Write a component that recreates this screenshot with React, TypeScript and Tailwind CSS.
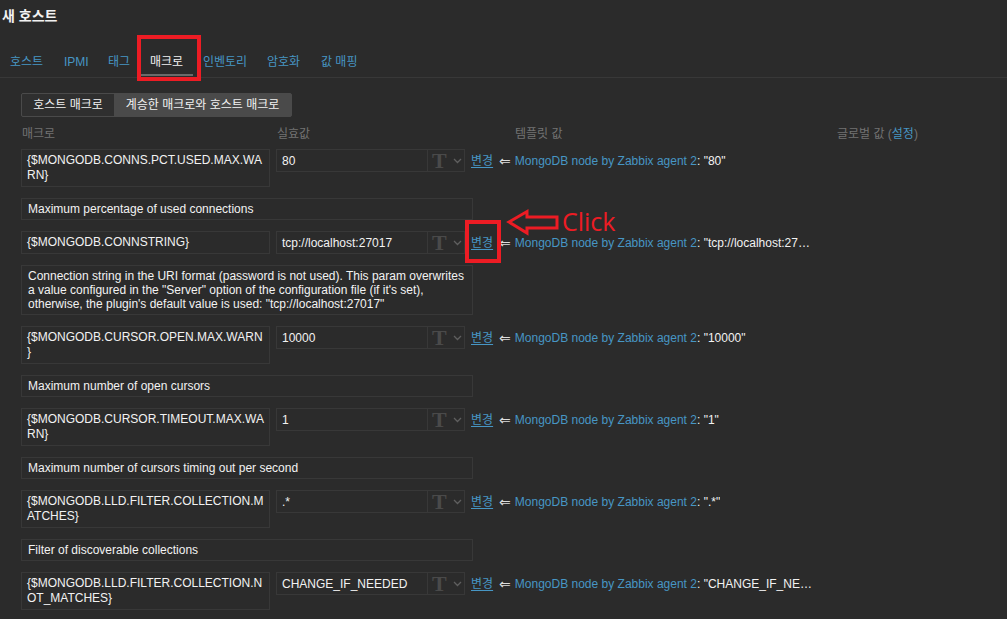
import React from "react";

const FONT = '"Liberation Sans", "Noto Sans CJK KR", Arial, sans-serif';

type Row = {
  macro: string[];
  value: string;
  tpl: string;
  desc?: string[];
};

const rows: Row[] = [
  {
    macro: ["{$MONGODB.CONNS.PCT.USED.MAX.WA", "RN}"],
    value: "80",
    tpl: '"80"',
    desc: ["Maximum percentage of used connections"],
  },
  {
    macro: ["{$MONGODB.CONNSTRING}"],
    value: "tcp://localhost:27017",
    tpl: '"tcp://localhost:27017"',
    desc: [
      "Connection string in the URI format (password is not used). This param overwrites",
      'a value configured in the "Server" option of the configuration file (if it\'s set),',
      'otherwise, the plugin\'s default value is used: "tcp://localhost:27017"',
    ],
  },
  {
    macro: ["{$MONGODB.CURSOR.OPEN.MAX.WARN", "}"],
    value: "10000",
    tpl: '"10000"',
    desc: ["Maximum number of open cursors"],
  },
  {
    macro: ["{$MONGODB.CURSOR.TIMEOUT.MAX.WA", "RN}"],
    value: "1",
    tpl: '"1"',
    desc: ["Maximum number of cursors timing out per second"],
  },
  {
    macro: ["{$MONGODB.LLD.FILTER.COLLECTION.M", "ATCHES}"],
    value: ".*",
    tpl: '".*"',
    desc: ["Filter of discoverable collections"],
  },
  {
    macro: ["{$MONGODB.LLD.FILTER.COLLECTION.N", "OT_MATCHES}"],
    value: "CHANGE_IF_NEEDED",
    tpl: '"CHANGE_IF_NEEDED"',
  },
];

const tabs = [
  { label: "호스트", w: "w-[54px]" },
  { label: "IPMI", w: "w-[44px]" },
  { label: "태그", w: "w-[42px]" },
  { label: "매크로", w: "w-[53px]", active: true },
  { label: "인벤토리", w: "w-[64px]" },
  { label: "암호화", w: "w-[54px]" },
  { label: "값 매핑", w: "w-[60px]" },
];

function MacroRow({ r }: { r: Row }) {
  const two = r.macro.length > 1;
  return (
    <div className="flex items-start">
      <div
        className={`w-[249px] ${two ? "h-[38px]" : "h-[23px]"} border border-[#383838] pl-[5px] pt-[3px] leading-[15px] text-[#f2f2f2]`}
      >
        {r.macro.map((l, i) => (
          <div key={i} className="whitespace-nowrap">
            {l}
          </div>
        ))}
      </div>
      <div className="ml-[6px] flex h-[23px] w-[189px] border border-[#383838]">
        <div className="flex w-[151px] items-center border-r border-[#383838] pl-[5px] text-[#f2f2f2] whitespace-nowrap">
          {r.value}
        </div>
        <div className="flex flex-1 items-center pl-[4px]">
          <span
            className="text-[22px] font-bold leading-none text-[#4a4a4a]"
            style={{ fontFamily: '"Liberation Serif", serif' }}
          >
            T
          </span>
          <svg width="9" height="6" viewBox="0 0 9 6" className="ml-[6px]">
            <path d="M1 1 L4.5 4.5 L8 1" stroke="#5f5f5f" strokeWidth="1.3" fill="none" />
          </svg>
        </div>
      </div>
      <div className="ml-[6px] flex h-[23px] items-center whitespace-nowrap">
        <span className="text-[#4796c4] underline underline-offset-2">변경</span>
        <span
          className="ml-[6px] text-[14px] leading-none text-[#dcdcdc]"
          style={{ fontFamily: '"DejaVu Sans", sans-serif' }}
        >
          ⇐
        </span>
        <span className="ml-[4px] block max-w-[298px] overflow-hidden text-ellipsis whitespace-nowrap">
          <span className="text-[#4796c4]">MongoDB node by Zabbix agent 2</span>
          <span className="text-[#f2f2f2]">: {r.tpl}</span>
        </span>
      </div>
    </div>
  );
}

export default function App() {
  return (
    <div
      className="relative h-[619px] w-[1007px] overflow-hidden bg-[#2b2b2b] text-[12px] text-[#f2f2f2]"
      style={{ fontFamily: FONT }}
    >
      <div className="flex h-[32px] items-center pl-[2px] text-[14px] font-bold text-[#f2f2f2]">새 호스트</div>

      <div className="mt-[13px] flex h-[33px] border-b border-[#383838]">
        {tabs.map((t) => (
          <div key={t.label} className={`${t.w} relative flex items-center pl-[10px] pt-[2px] whitespace-nowrap`}>
            <span className={t.active ? "text-[#f2f2f2]" : "text-[#4796c4]"}>{t.label}</span>
            {t.active && <div className="absolute bottom-[1px] left-0 right-0 h-[2px] bg-[#6a6a6a]" />}
          </div>
        ))}
      </div>

      <div className="ml-[21px] mt-[15px] flex h-[24px] w-[271px] overflow-hidden rounded-[2px] border border-[#4a4a4a] bg-[#4a4a4a]">
        <div className="flex w-[92px] items-center justify-center bg-[#2f2f2f] text-[#f2f2f2]">호스트 매크로</div>
        <div className="flex flex-1 items-center justify-center text-[#f2f2f2]">계승한 매크로와 호스트 매크로</div>
      </div>

      <div className="ml-[21px] mt-[9px] flex h-[16px] items-center text-[#737373]">
        <div className="w-[256px] pl-[1px]">매크로</div>
        <div className="w-[238px]">실효값</div>
        <div className="w-[322px]">템플릿 값</div>
        <div>
          글로벌 값 (<span className="text-[#4796c4]">설정</span>)
        </div>
      </div>

      <div className="ml-[21px] mt-[7px] flex flex-col gap-[11px]">
        {rows.map((r, i) => (
          <React.Fragment key={i}>
            <MacroRow r={r} />
            {r.desc && (
              <div className="w-[452px] border border-[#383838] py-[3px] pl-[6px] leading-[14px] text-[#f2f2f2]">
                {r.desc.map((l, j) => (
                  <div key={j} className="whitespace-nowrap">
                    {l}
                  </div>
                ))}
              </div>
            )}
          </React.Fragment>
        ))}
      </div>

      {/* annotations */}
      <div className="absolute left-[137px] top-[35px] h-[46px] w-[64px] border-[4px] border-[#ed1c24]" />
      <div className="absolute left-[465px] top-[220px] h-[43px] w-[36px] border-[4px] border-[#ed1c24]" />
      <svg className="absolute left-[505px] top-[208px]" width="56" height="30" viewBox="0 0 56 30">
        <path
          d="M4 14 L22 3.5 L22 9 L52 9 L52 20 L22 20 L22 25 Z"
          fill="none"
          stroke="#ed1c24"
          strokeWidth="3"
          strokeLinejoin="miter"
        />
      </svg>
      <div
        className="absolute left-[562px] top-[206px] text-[25px] leading-[30px] text-[#ed1c24]"
        style={{ fontFamily: '"Open Sans", sans-serif' }}
      >
        Click
      </div>
    </div>
  );
}
